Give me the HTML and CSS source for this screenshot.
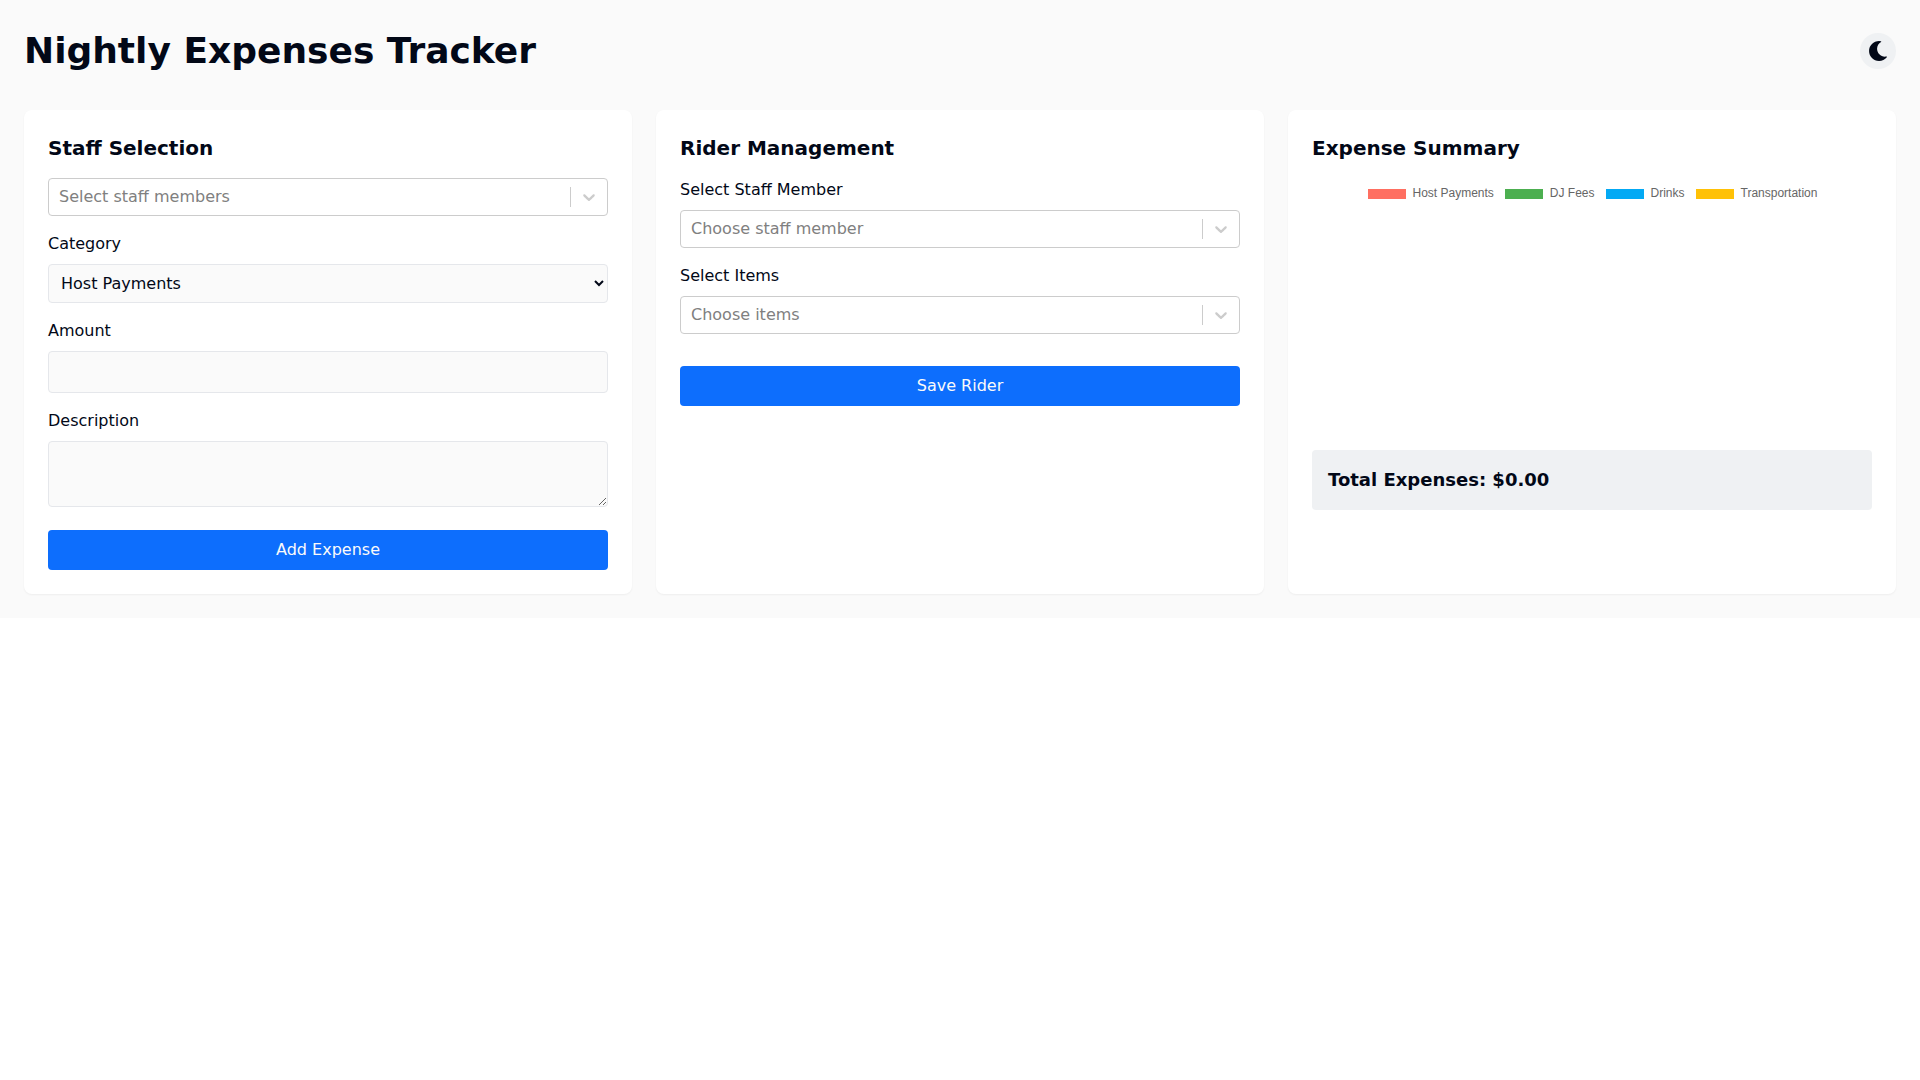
FILE: index.html
```html
<!DOCTYPE html>
<html lang="en">
<head>
  <meta charset="UTF-8" />
  <meta name="viewport" content="width=device-width, initial-scale=1" />
  <title>Nightly Expenses Tracker</title>
  <link rel="stylesheet" href="styles.css">
</head>
<body>
  <div class="container">
    <header class="header">
      <h1>Nightly Expenses Tracker</h1>
      <button type="button" class="theme-toggle" aria-label="Toggle theme">
        <svg viewBox="0 0 512 512" width="20" height="20"><path d="M283.211 512c78.962 0 151.079-35.925 198.857-94.792 7.068-8.708-.639-21.43-11.562-19.35-124.203 23.654-238.262-71.576-238.262-196.954 0-72.222 38.662-138.635 101.498-174.394 9.686-5.512 7.25-20.197-3.756-22.23A258.156 258.156 0 0 0 283.211 0c-141.309 0-256 114.511-256 256 0 141.309 114.511 256 256 256z"/></svg>
      </button>
    </header>

    <main class="grid">
      <section class="card">
        <h2>Staff Selection</h2>
        <div class="picker">
          <span class="placeholder">Select staff members</span>
          <span class="separator"></span>
          <svg class="chevron" viewBox="0 0 20 20" width="20" height="20"><path d="M4.516 7.548c0.436-0.446 1.043-0.481 1.576 0l3.908 3.747 3.908-3.747c0.533-0.481 1.141-0.446 1.574 0 0.436 0.445 0.408 1.197 0 1.615-0.406 0.418-4.695 4.502-4.695 4.502-0.217 0.223-0.502 0.335-0.787 0.335s-0.57-0.112-0.789-0.335c0 0-4.287-4.084-4.695-4.502s-0.436-1.17 0-1.615z"/></svg>
        </div>

        <form class="expense-form">
          <div class="form-group">
            <label for="category">Category</label>
            <select id="category">
              <option>Host Payments</option>
              <option>DJ Fees</option>
              <option>Drinks</option>
              <option>Transportation</option>
            </select>
          </div>
          <div class="form-group">
            <label for="amount">Amount</label>
            <input type="number" id="amount" />
          </div>
          <div class="form-group description">
            <label for="description">Description</label>
            <textarea id="description" rows="2"></textarea>
          </div>
          <button type="button" class="btn">Add Expense</button>
        </form>
      </section>

      <section class="card">
        <h2>Rider Management</h2>
        <div class="form-group">
          <label>Select Staff Member</label>
          <div class="picker">
            <span class="placeholder">Choose staff member</span>
            <span class="separator"></span>
            <svg class="chevron" viewBox="0 0 20 20" width="20" height="20"><path d="M4.516 7.548c0.436-0.446 1.043-0.481 1.576 0l3.908 3.747 3.908-3.747c0.533-0.481 1.141-0.446 1.574 0 0.436 0.445 0.408 1.197 0 1.615-0.406 0.418-4.695 4.502-4.695 4.502-0.217 0.223-0.502 0.335-0.787 0.335s-0.57-0.112-0.789-0.335c0 0-4.287-4.084-4.695-4.502s-0.436-1.17 0-1.615z"/></svg>
          </div>
        </div>
        <div class="form-group items">
          <label>Select Items</label>
          <div class="picker">
            <span class="placeholder">Choose items</span>
            <span class="separator"></span>
            <svg class="chevron" viewBox="0 0 20 20" width="20" height="20"><path d="M4.516 7.548c0.436-0.446 1.043-0.481 1.576 0l3.908 3.747 3.908-3.747c0.533-0.481 1.141-0.446 1.574 0 0.436 0.445 0.408 1.197 0 1.615-0.406 0.418-4.695 4.502-4.695 4.502-0.217 0.223-0.502 0.335-0.787 0.335s-0.57-0.112-0.789-0.335c0 0-4.287-4.084-4.695-4.502s-0.436-1.17 0-1.615z"/></svg>
          </div>
        </div>
        <button type="button" class="btn">Save Rider</button>
      </section>

      <section class="card">
        <h2>Expense Summary</h2>
        <div class="chart">
          <ul class="legend">
            <li><span class="swatch host"></span>Host Payments</li>
            <li><span class="swatch dj"></span>DJ Fees</li>
            <li><span class="swatch drinks"></span>Drinks</li>
            <li><span class="swatch transport"></span>Transportation</li>
          </ul>
        </div>
        <div class="total">Total Expenses: $0.00</div>
      </section>
    </main>
  </div>
</body>
</html>
```
FILE: styles.css
```css
:root {
  --background: #fafafa;
  --foreground: #020817;
  --primary: #0d6efd;
  --muted: #eff1f3;
  --border: #e5e7eb;
}

* {
  box-sizing: border-box;
}

body {
  margin: 0;
  background-color: #fff;
  color: var(--foreground);
  font-family: "DejaVu Sans", sans-serif;
  font-size: 16px;
  line-height: 1.5;
}

.container {
  padding: 24px;
  background-color: var(--background);
}

.header {
  display: flex;
  justify-content: space-between;
  align-items: center;
  margin-bottom: 32px;
}

h1 {
  margin: 0;
  font-size: 36px;
  font-weight: 700;
}

.theme-toggle {
  display: flex;
  padding: 8px;
  border: none;
  border-radius: 50%;
  background-color: var(--muted);
  color: var(--foreground);
  cursor: pointer;
}

.theme-toggle svg {
  fill: currentColor;
}

.grid {
  display: grid;
  grid-template-columns: repeat(3, 1fr);
  gap: 24px;
}

.card {
  padding: 24px;
  border-radius: 8px;
  background-color: #fff;
  box-shadow: 0 1px 2px rgba(0, 0, 0, 0.05);
}

h2 {
  margin: 0 0 16px;
  font-size: 20px;
  line-height: 28px;
  font-weight: 600;
}

.expense-form {
  margin-top: 16px;
}

.form-group {
  margin-bottom: 16px;
}

.form-group.description {
  margin-bottom: 23px;
}

.form-group.items {
  margin-bottom: 32px;
}

label {
  display: block;
  margin-bottom: 8px;
}

select,
input,
textarea {
  display: block;
  width: 100%;
  padding: 8px;
  border: 1px solid var(--border);
  border-radius: 4px;
  background-color: var(--background);
  color: var(--foreground);
  font: inherit;
}

select {
  height: 39px;
}

/* searchable dropdown */
.picker {
  display: flex;
  align-items: center;
  height: 38px;
  border: 1px solid #ccc;
  border-radius: 4px;
  background-color: #fff;
}

.placeholder {
  flex: 1;
  padding-left: 10px;
  color: #808080;
}

.separator {
  align-self: stretch;
  width: 1px;
  margin: 8px 0;
  background-color: #ccc;
}

.chevron {
  margin: 0 8px;
  fill: #ccc;
}

.btn {
  display: block;
  width: 100%;
  padding: 8px 16px;
  border: none;
  border-radius: 4px;
  background-color: var(--primary);
  color: #fafafa;
  font: inherit;
  cursor: pointer;
}

.chart {
  height: 256px;
  margin-bottom: 16px;
}

.legend {
  display: flex;
  justify-content: center;
  gap: 10px;
  margin: 0;
  padding: 9px 0 0;
  list-style: none;
  color: #666;
  font: 12px/12px "Liberation Sans", Arial, sans-serif;
}

.legend li {
  display: flex;
  align-items: flex-start;
}

.swatch {
  width: 38px;
  height: 10px;
  margin: 2px 6.6px 0 1.4px;
}

.host {
  background-color: #ff6f61;
}

.dj {
  background-color: #4caf50;
}

.drinks {
  background-color: #03a9f4;
}

.transport {
  background-color: #ffc107;
}

.total {
  padding: 16px;
  border-radius: 4px;
  background-color: var(--muted);
  font-size: 18px;
  line-height: 28px;
  font-weight: 600;
}
```
